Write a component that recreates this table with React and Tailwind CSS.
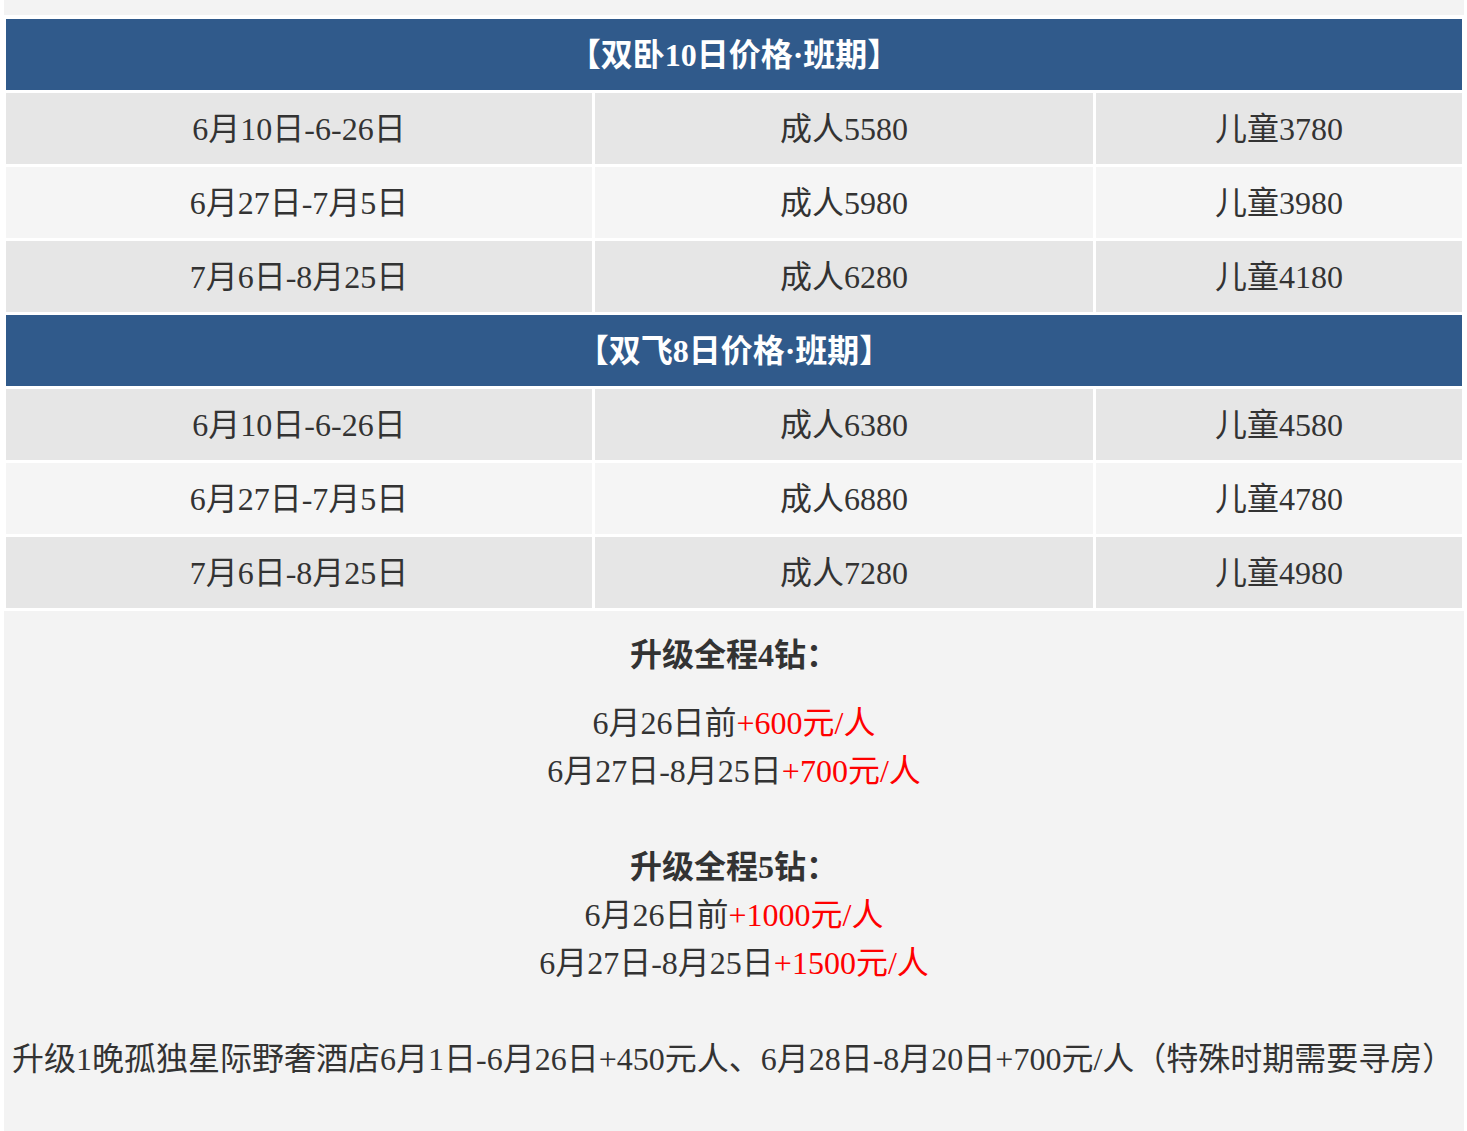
const dbl = [
  ['6月10日-6-26日', '成人5580', '儿童3780'],
  ['6月27日-7月5日', '成人5980', '儿童3980'],
  ['7月6日-8月25日', '成人6280', '儿童4180'],
]

const fly = [
  ['6月10日-6-26日', '成人6380', '儿童4580'],
  ['6月27日-7月5日', '成人6880', '儿童4780'],
  ['7月6日-8月25日', '成人7280', '儿童4980'],
]

const font = { fontFamily: '"Liberation Serif", "Noto Sans CJK SC", serif' }

function Header({ children }) {
  return (
    <div className="h-[71px] bg-[#305a8b] flex items-center justify-center text-white font-bold text-[32px]">
      {children}
    </div>
  )
}

function Row({ cells, shade }) {
  const bg = shade ? 'bg-[#e6e6e6]' : 'bg-[#f5f5f5]'
  return (
    <div className="h-[71px] grid grid-cols-[586px_498px_366px] gap-[3px]">
      {cells.map((c, i) => (
        <div key={i} className={`${bg} flex items-center justify-center`}>
          {c}
        </div>
      ))}
    </div>
  )
}

function Price({ date, add }) {
  return (
    <div>
      {date}
      <span className="text-[#ff0000]">{add}</span>
    </div>
  )
}

export default function App() {
  return (
    <div className="min-h-screen bg-white">
      <div className="ml-[4px] w-[1460px] text-[32px] leading-[48px] text-[#333333]" style={font}>
        <div className="h-[15px] bg-[#f3f3f3]"></div>

        <div className="bg-white pt-[4px] px-[2px] pb-[3px] flex flex-col gap-[3px]">
          <Header>【双卧10日价格·班期】</Header>
          {dbl.map((r, i) => (
            <Row key={i} cells={r} shade={i % 2 === 0} />
          ))}
          <Header>【双飞8日价格·班期】</Header>
          {fly.map((r, i) => (
            <Row key={i} cells={r} shade={i % 2 === 0} />
          ))}
        </div>

        <div className="bg-[#f3f3f3] pt-[20px] pb-[48px]">
          <div className="text-center">
            <div className="font-bold">升级全程4钻：</div>
            <div className="mt-[20px]">
              <Price date="6月26日前" add="+600元/人" />
              <Price date="6月27日-8月25日" add="+700元/人" />
            </div>
            <div className="h-[48px]"></div>
            <div className="font-bold">升级全程5钻：</div>
            <Price date="6月26日前" add="+1000元/人" />
            <Price date="6月27日-8月25日" add="+1500元/人" />
            <div className="h-[48px]"></div>
          </div>
          <div className="pl-[8px] whitespace-nowrap">
            升级1晚孤独星际野奢酒店6月1日-6月26日+450元人、6月28日-8月20日+700元/人（特殊时期需要寻房）
          </div>
        </div>
      </div>
    </div>
  )
}
